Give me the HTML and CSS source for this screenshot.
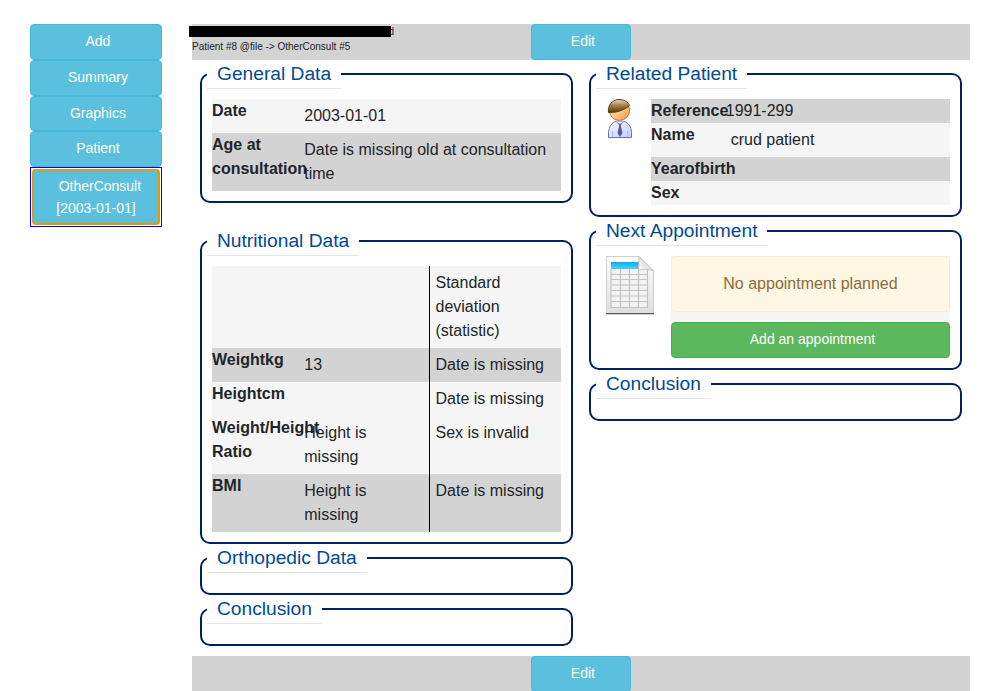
FILE: index.html
```html
<!DOCTYPE html>
<html lang="en">
<head>
<meta charset="utf-8">
<title>OtherConsult</title>
<link rel="stylesheet" href="styles.css">
</head>
<body>
<div class="page">
  <nav class="sidebar">
    <a class="btn">&nbsp;Add</a>
    <a class="btn">&nbsp;Summary</a>
    <a class="btn">&nbsp;Graphics</a>
    <a class="btn">&nbsp;Patient</a>
    <div class="current"><a class="btn btn-current">&nbsp;&nbsp;OtherConsult<br>[2003-01-01]</a></div>
  </nav>
  <main class="main">
    <header class="bar">
      <div class="crumb">
        <div class="crumb-line"><span class="tail">d</span><span class="redacted"></span></div>
        <div class="crumb-line">Patient #8 @file -&gt; OtherConsult #5</div>
      </div>
      <a class="btn btn-edit">&nbsp;Edit</a>
    </header>
    <div class="columns">
      <div class="column">
        <fieldset class="general">
          <legend>General Data</legend>
          <div class="row light"><div class="label">Date</div><div class="value">2003-01-01</div></div>
          <div class="row dark"><div class="label">Age at consultation</div><div class="value">Date is missing old at consultation time</div></div>
        </fieldset>
        <fieldset>
          <legend>Nutritional Data</legend>
          <div class="row three light"><div class="label"></div><div class="value"></div><div class="value stat">Standard deviation (statistic)</div></div>
          <div class="row three dark"><div class="label">Weightkg</div><div class="value">13</div><div class="value stat">Date is missing</div></div>
          <div class="row three light"><div class="label">Heightcm</div><div class="value"></div><div class="value stat">Date is missing</div></div>
          <div class="row three light"><div class="label">Weight/Height Ratio</div><div class="value">Height is missing</div><div class="value stat">Sex is invalid</div></div>
          <div class="row three dark"><div class="label">BMI</div><div class="value">Height is missing</div><div class="value stat">Date is missing</div></div>
        </fieldset>
        <fieldset><legend>Orthopedic Data</legend></fieldset>
        <fieldset><legend>Conclusion</legend></fieldset>
      </div>
      <div class="column">
        <fieldset>
          <legend>Related Patient</legend>
          <div class="with-icon patient">
            <svg class="patient-icon" width="26" height="40" viewBox="0 0 26 40">
              <defs>
                <linearGradient id="skin" x1="0" y1="0" x2="1" y2="1"><stop offset="0" stop-color="#ffe6bd"/><stop offset=".55" stop-color="#ffc78a"/><stop offset="1" stop-color="#f08c30"/></linearGradient>
                <linearGradient id="hair" x1="0" y1="0" x2="0" y2="1"><stop offset="0" stop-color="#e2d8c2"/><stop offset=".5" stop-color="#a07a42"/><stop offset="1" stop-color="#5d3406"/></linearGradient>
                <linearGradient id="shirt" x1="0" y1="0" x2="1" y2="1"><stop offset="0" stop-color="#f8faff"/><stop offset="1" stop-color="#c3ccfb"/></linearGradient>
              </defs>
              <path d="M1.500 38.500V33.500C2 28 5 23 9 22.500H17C21 23 24.500 28 24.500 33.500V38.500Z" fill="url(#shirt)" stroke="#6870c0"/>
              <path d="M5.500 32V38M20.500 32V38" stroke="#aab4f2"/>
              <path d="M9 22.500L13 26L17 22.500" fill="#fff" stroke="#8c94d8"/>
              <path d="M11.500 24.500H14.500L13.800 27L15.500 34L13 38L10.500 34L12.200 27Z" fill="#5058aa"/>
              <circle cx="12.500" cy="11.500" r="10" fill="url(#skin)" stroke="#c06f1c"/>
              <path d="M1.500 13.500C.5 6 5.500 .5 12 .5C17.500 .5 21 3 22.500 6.500C19 9.500 12 14 1.500 13.500Z" fill="url(#hair)" stroke="#5f3c12"/>
            </svg>
            <div class="fill">
              <div class="row dark"><div class="label">Reference</div><div class="value flush">1991-299</div></div>
              <div class="row light"><div class="label">Name</div><div class="value">crud patient</div></div>
              <div class="row dark"><div class="label">Yearofbirth</div></div>
              <div class="row light"><div class="label">Sex</div></div>
            </div>
          </div>
        </fieldset>
        <fieldset>
          <legend>Next Appointment</legend>
          <div class="with-icon appointment">
            <svg class="sheet-icon" width="50" height="60" viewBox="0 0 50 60">
              <defs>
                <linearGradient id="paper" x1="0" y1="0" x2="0" y2="1"><stop offset="0" stop-color="#fff"/><stop offset="1" stop-color="#dedede"/></linearGradient>
                <linearGradient id="head" x1="0" y1="0" x2="0" y2="1"><stop offset="0" stop-color="#11aaf0"/><stop offset="1" stop-color="#43d6ff"/></linearGradient>
                <linearGradient id="fold" x1="0" y1="1" x2=".6" y2="0.4"><stop offset="0" stop-color="#fff"/><stop offset="1" stop-color="#dcdcdc"/></linearGradient>
              </defs>
              <path d="M1.500.5H34L48.500 15V57.500H1.500Z" fill="url(#paper)" stroke="#cfcfcf"/>
              <path d="M1 57.600H49" stroke="#555" stroke-width="1.400"/>
              <rect x="6" y="13" width="37" height="39" fill="#f3f3f3"/>
              <path d="M6 13V52M15.500 13V52M24.500 13V52M33.500 13V52M42.500 13V52M6 18.500H43M6 23.500H43M6 29H43M6 34.500H43M6 40H43M6 45.500H43M6 51.500H43" stroke="#c2c2c2" stroke-width="1.200" fill="none"/>
              <rect x="6" y="6" width="28" height="7" fill="url(#head)"/>
              <path d="M34 .5L48.500 15C43 13 38 13 33.500 14Z" fill="url(#fold)" stroke="#bdbdbd" stroke-width=".8"/>
            </svg>
            <div class="fill light">
              <div class="alert">No appointment planned</div>
              <a class="btn btn-green">&nbsp;Add an appointment</a>
            </div>
          </div>
        </fieldset>
        <fieldset><legend>Conclusion</legend></fieldset>
      </div>
    </div>
    <footer class="bar"><a class="btn btn-edit">&nbsp;Edit</a></footer>
  </main>
</div>
</body>
</html>
```
FILE: styles.css
```css
* { box-sizing: border-box; }
html { overflow: hidden; }
body {
  margin: 0;
  font: 16px/24px "Liberation Sans", Arial, sans-serif;
  color: #212529;
  background: #fff;
}
.page { display: flex; gap: 30px; padding: 24px 30px 0; }
.sidebar { width: 132px; }
.main { width: 778px; }
.btn {
  display: block;
  height: 35.750px;
  padding: 6px 12px;
  border: 1px solid #46b8da;
  border-radius: 4px;
  background: #5bc0de;
  color: #fff;
  font-size: 14px;
  line-height: 21.600px;
  text-align: center;
}
.current { padding: 1px; border: 1px solid #00f; height: 60px; }
.btn-current { height: 56px; border: 2px solid #e69a00; padding: 5px 10px; }
.bar {
  display: grid;
  grid-template-columns: 1fr 100px 1fr;
  height: 36px;
  background: #d3d3d3;
}
.btn-edit { grid-column: 2; }
.crumb { font-size: 10px; line-height: 15px; }
.crumb-line { position: relative; height: 15px; white-space: nowrap; }
.tail { margin-left: 196.500px; }
.redacted {
  position: absolute;
  left: -3px;
  top: 2px;
  width: 202px;
  height: 11px;
  background: #000;
}
.columns { display: flex; gap: 16px; margin-top: -0.400px; padding: 0 8px 10.400px; }
.column { width: 373px; }
fieldset {
  margin: 0;
  padding: 10px;
  min-width: 0;
  border: 2px solid #002060;
  border-radius: 10px;
}
.general { margin-bottom: 24px; }
legend {
  margin-left: -5px;
  padding: 0 10px;
  border-bottom: 1px solid #e5e5e5;
  color: #004a94;
  font-size: 19.200px;
  line-height: 28px;
}
.row { display: grid; grid-template-columns: 25% 1fr; min-height: 24px; }
.three { grid-template-columns: 25% 130px 1fr; }
.label { font-weight: bold; }
.value { padding: 5px; }
.flush { padding: 0; }
.three .value { padding-right: 12px; }
.three .stat { border-left: 1px solid #000; padding-left: 5.250px; }
.light { background: #f5f5f5; }
.dark { background: #d3d3d3; }
.with-icon { display: grid; }
.patient { grid-template-columns: 50px 1fr; }
.appointment { grid-template-columns: 70px 1fr; }
.patient-icon { margin-left: 6px; }
.sheet-icon { margin-left: 4px; }
.alert {
  height: 56px;
  margin-bottom: 10px;
  padding: 15px;
  border: 1px solid #faebcc;
  border-radius: 4px;
  background: #fdf7e3;
  color: #8a6d3b;
  text-align: center;
}
.btn-green { height: 36px; background: #5cb85c; border-color: #4cae4c; }
```
